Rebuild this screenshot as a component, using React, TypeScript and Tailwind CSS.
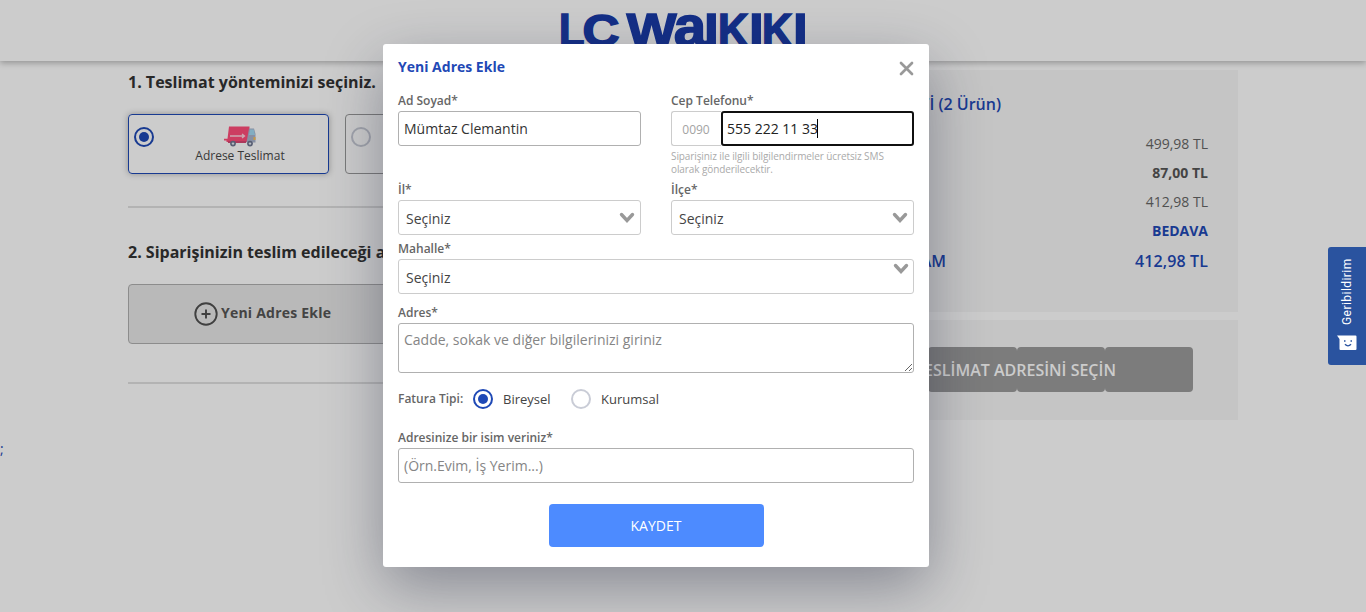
import type { ReactNode } from "react";

// x and w give each letter's ink box; l, r and s are the glyph's own left edge, right edge (font units) and size
const logoLetters = [
  { ch: "L", x: 561, w: 23, l: 137, r: 1188, s: 45.6 },
  { ch: "C", x: 584, w: 34, l: 94, r: 1389, s: 44.6 },
  { ch: "W", x: 626, w: 51, l: 6, r: 1926, s: 45.6 },
  { ch: "a", x: 675, w: 32, l: 70, r: 1135, s: 57.5 },
  { ch: "I", x: 707, w: 9, l: 137, r: 432, s: 45.6 },
  { ch: "K", x: 720, w: 29, l: 137, r: 1460, s: 45.6 },
  { ch: "I", x: 752, w: 9, l: 137, r: 432, s: 45.6 },
  { ch: "K", x: 764, w: 29, l: 137, r: 1460, s: 45.6 },
  { ch: "I", x: 796, w: 9, l: 137, r: 432, s: 45.6 },
];

function Logo() {
  return (
    <svg width="246" height="38" viewBox="560 12 246 38" className="mt-3 shrink-0" fill="#193ba9" stroke="#193ba9" strokeWidth="1.6">
      {logoLetters.map((g, i) => {
        const unit = g.s / 2048;
        const sx = (g.w - 1.6) / ((g.r - g.l) * unit);
        const tx = g.x + 0.8 - g.l * unit * sx;
        return (
          <text key={i} transform={`translate(${tx} 45.8) scale(${sx} 1)`} fontFamily="Liberation Sans" fontWeight="700" fontSize={g.s}>
            {g.ch}
          </text>
        );
      })}
    </svg>
  );
}

function Truck() {
  return (
    <svg width="32" height="21" viewBox="0 0 32 21">
      <path d="M5 0.5H25.5V16H2.5V14.5H0V12.8H3.5Z" fill="#ff4d7a" />
      <path d="M25 2.5H30L31.5 8V16.5H22.5Z" fill="#a9b4cc" />
      <path d="M26 3.5H29.8L31 9H25Z" fill="#a3d9f3" />
      <path d="M29.5 11H31.5V14H29.5Z" fill="#f8c05a" />
      <path d="M6 10H20M18 8L20.5 10L18 12" fill="none" stroke="#ffd4df" strokeWidth="1.3" />
      <path d="M22 15V17H4V15Z" fill="#d84672" />
      <circle cx="9" cy="17.6" r="2.9" fill="#6e7791" />
      <circle cx="9" cy="17.6" r="1.2" fill="#e8ecf4" />
      <circle cx="26" cy="17.6" r="2.9" fill="#6e7791" />
      <circle cx="26" cy="17.6" r="1.2" fill="#e8ecf4" />
    </svg>
  );
}

function Radio({ checked }: { checked?: boolean }) {
  return checked ? (
    <span className="flex size-5 shrink-0 items-center justify-center rounded-full border-2 border-[#1f49b6] bg-white">
      <span className="size-2.5 rounded-full bg-[#1f49b6]" />
    </span>
  ) : (
    <span className="size-5 shrink-0 rounded-full border-2 border-[#c9ccd6] bg-white" />
  );
}

function Label({ children }: { children: ReactNode }) {
  return <div className="h-[17px] text-[12px] leading-[17px] font-semibold whitespace-nowrap text-[#666]">{children}</div>;
}

function Select({ high }: { high?: boolean }) {
  return (
    <button className="mt-0.5 flex h-[35px] w-full items-center justify-between rounded-[3px] border border-[#ccc] bg-white pt-0.5 pr-[5px] pl-[7px] text-left text-[14px] text-[#444]">
      <span>Seçiniz</span>
      <svg width="16" height="12" viewBox="0 0 16 12" className={high ? "mr-[-1px] mb-[17px]" : "mb-px"}>
        <path d="M2.5 2.5L8 8.5L13.5 2.5" fill="none" stroke="#999" strokeWidth="3.4" strokeLinecap="round" />
      </svg>
    </button>
  );
}

function Summary({ label, value, cls }: { label: string; value: string; cls: string }) {
  return (
    <div className={"flex h-[29px] items-center justify-between text-[14px] " + cls}>
      <span>{label}</span>
      <span>{value}</span>
    </div>
  );
}

function Modal() {
  return (
    <div className="h-[523px] w-[546px] rounded-[3px] bg-white px-[15px] pt-[11px] shadow-[0_20px_60px_-2px_rgba(27,33,58,0.4)]">
      <div className="flex h-[22px] items-center justify-between">
        <h2 className="text-[14px] font-bold text-[#1f49b6]">Yeni Adres Ekle</h2>
        <svg width="15" height="15" viewBox="0 0 15 15" className="mt-1">
          <path d="M2 2L13 13M13 2L2 13" stroke="#999" strokeWidth="2.7" strokeLinecap="round" />
        </svg>
      </div>
      <div className="mt-[15px] grid grid-cols-2 gap-x-[30px]">
        <div className="h-[89px]">
          <Label>Ad Soyad*</Label>
          <input defaultValue="Mümtaz Clemantin" className="mt-0.5 h-[35px] w-full rounded-[3px] border border-[#b0b0b0] px-[5px] text-[14px] text-[#333]" />
        </div>
        <div className="h-[89px]">
          <Label>Cep Telefonu*</Label>
          <div className="mt-0.5 flex h-[35px]">
            <span className="flex w-[50px] items-center justify-center rounded-l-[3px] border border-r-0 border-[#ccc] pt-0.5 pr-px text-[12px] text-[#a3a3a3]">0090</span>
            <span className="flex flex-1 items-center rounded-[3px] border-2 border-[#101010] px-1 text-[14px] text-[#222]">
              555 222 11 33
              <span className="-ml-px h-[19px] w-px bg-black" />
            </span>
          </div>
          <p className="mt-1 text-[10px] leading-[13px] tracking-[-0.1px] text-[#aaa]">
            Siparişiniz ile ilgili bilgilendirmeler ücretsiz SMS
            <br />
            olarak gönderilecektir.
          </p>
        </div>
        <div>
          <Label>İl*</Label>
          <Select />
        </div>
        <div>
          <Label>İlçe*</Label>
          <Select />
        </div>
      </div>
      <div className="mt-[5px]">
        <Label>Mahalle*</Label>
        <Select high />
      </div>
      <div className="mt-[10px]">
        <Label>Adres*</Label>
        <textarea placeholder="Cadde, sokak ve diğer bilgilerinizi giriniz" className="mt-0.5 block h-[50px] w-full rounded-[3px] border border-[#b0b0b0] px-[5px] py-[5px] text-[14px] placeholder:text-[#858585]" />
      </div>
      <div className="mt-4 flex h-5 items-center text-[13px] text-[#444]">
        <span className="w-[75px] text-[12px] font-semibold text-[#666]">Fatura Tipi:</span>
        <Radio checked />
        <span className="ml-[10px] w-[68px] pt-px">Bireysel</span>
        <Radio />
        <span className="ml-[10px] pt-px">Kurumsal</span>
      </div>
      <div className="mt-5">
        <Label>Adresinize bir isim veriniz*</Label>
        <input placeholder="(Örn.Evim, İş Yerim...)" className="mt-0.5 h-[35px] w-full rounded-[3px] border border-[#b0b0b0] px-[5px] text-[14px] placeholder:text-[#858585]" />
      </div>
      <button className="mx-auto mt-[21px] block h-[43px] w-[215px] rounded-[4px] bg-[#4d8bff] text-[14px] text-white">KAYDET</button>
    </div>
  );
}

export default function App() {
  return (
    <div className="relative h-[612px] overflow-hidden bg-white font-['Open_Sans',sans-serif] text-[#333]">
      <header className="relative flex h-[61px] justify-center bg-white shadow-[0_2px_6px_rgba(0,0,0,0.28)]">
        <Logo />
      </header>
      <main className="flex justify-between pr-32 pl-32">
        <section className="w-[640px] shrink-0">
          <h3 className="mt-[9px] h-6 text-[16px] leading-6 font-bold">1. Teslimat yönteminizi seçiniz.</h3>
          <div className="mt-5 flex gap-4">
            <div className="flex h-[60px] w-[201px] rounded-[4px] border border-[#1f49b6] pl-[5px] shadow-[0_0_6px_rgba(0,0,0,0.3)]">
              <div className="pt-3">
                <Radio checked />
              </div>
              <div className="flex flex-1 flex-col items-center pt-[11px] pr-[2px]">
                <Truck />
                <span className="text-[12px] leading-[18px] text-[#484848]">Adrese Teslimat</span>
              </div>
            </div>
            <div className="h-[60px] w-[201px] rounded-[4px] border border-[#999] pt-3 pl-[5px]">
              <div className="flex">
                <Radio />
              </div>
            </div>
          </div>
          <hr className="mt-8 border-t-2 border-[#e0e0e0]" />
          <h3 className="mt-8 h-6 text-[16px] leading-6 font-bold">2. Siparişinizin teslim edileceği adresi seçiniz.</h3>
          <div className="mt-5 flex h-[60px] w-[310px] items-center rounded-[4px] border border-[#b0b0b0] bg-[#e8e8e8] pl-[65px] text-[14px] font-bold tracking-[0.22px] text-[#555]">
            <svg width="24" height="24" viewBox="0 0 24 24" fill="none" stroke="#505050" strokeWidth="1.9" className="mr-[3px]">
              <circle cx="12" cy="12" r="10.7" />
              <path d="M12 7.5V16.5M7.5 12H16.5" />
            </svg>
            <span className="pb-1">Yeni Adres Ekle</span>
          </div>
          <hr className="mt-[38px] border-t-2 border-[#e0e0e0]" />
        </section>
        <aside className="mt-[9px] w-[440px] shrink-0">
          <div className="h-[242px] bg-[#f7f7f7] pr-[30px] pl-[45px]">
            <h3 className="mr-[207px] flex justify-end pt-[22px] text-[16px] leading-6 font-semibold whitespace-nowrap text-[#1f49b6]">SİPARİŞ ÖZETİ (2 Ürün)</h3>
            <div className="pt-[13px]">
              <Summary label="Ara Toplam" value="499,98 TL" cls="text-[#666]" />
              <Summary label="İndirim" value="87,00 TL" cls="font-bold text-[#555]" />
              <Summary label="Sepet" value="412,98 TL" cls="text-[#666]" />
              <Summary label="Kargo" value="BEDAVA" cls="font-bold text-[#1f49b6]" />
            </div>
            <div className="flex h-8 items-center text-[16px] font-semibold text-[#1f49b6]">
              <span className="w-[103px] text-right">TOPLAM</span>
              <span className="ml-auto tracking-[0.1px]">412,98 TL</span>
            </div>
          </div>
          <div className="mt-2 h-[100px] bg-[#f7f7f7] pt-[27px] pl-[42px]">
            <div className="grid w-[353px]">
              <div className="col-start-1 row-start-1 flex h-[45px]">
                {[0, 1, 2, 3].map((i) => (
                  <span key={i} className="flex-1 rounded-[4px] bg-[#9b9b9b]" />
                ))}
              </div>
              <span className="relative col-start-1 row-start-1 self-center pr-0.5 text-center text-[16px] font-semibold text-white">TESLİMAT ADRESİNİ SEÇİN</span>
            </div>
          </div>
        </aside>
      </main>
      <div className="mt-[19px] text-[14px] leading-5 text-[#1f49b6]">;</div>

      <div className="absolute inset-0 flex bg-black/20 pt-11 pl-[383px]">
        <Modal />
      </div>

      <div className="absolute top-[247px] right-0 flex h-[118px] w-[38px] flex-col items-center rounded-l-[3px] bg-[#2a539f] pt-3 text-white">
        <span className="h-[66px] rotate-180 font-[Roboto,sans-serif] text-[12px] leading-[16px] font-normal tracking-[0.45px] whitespace-nowrap [writing-mode:vertical-rl]">Geribildirim</span>
        <svg width="20" height="16" viewBox="0 0 20 16" className="mt-[10px]">
          <path d="M0 0.5H18.5Q19.5 0.5 19.5 1.5V14Q19.5 15 18.5 15H3.5Q2.5 15 2.5 14V4Z" fill="#fff" />
          <path d="M7 5.2H8.5V6.7H7ZM13.5 5.2H15V6.7H13.5Z" fill="#2a539f" />
          <path d="M8 9.3Q11 12.5 14 9.3" fill="none" stroke="#2a539f" strokeWidth="1.4" />
        </svg>
      </div>
    </div>
  );
}
